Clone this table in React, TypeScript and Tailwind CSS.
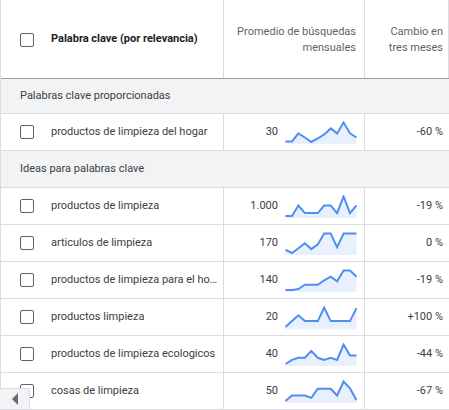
type Row = {
  keyword: string;
  avg: string;
  change: string;
  trend: number[];
};

const provided: Row[] = [
  {
    keyword: 'productos de limpieza del hogar',
    avg: '30',
    change: '-60 %',
    trend: [0.03, 0.03, 0.44, 0.23, 0, 0.18, 0.39, 0.7, 0.44, 1, 0.44, 0.23],
  },
];

const ideas: Row[] = [
  {
    keyword: 'productos de limpieza',
    avg: '1.000',
    change: '-19 %',
    trend: [0, 0, 0.54, 0.15, 0.15, 0.15, 0.54, 0.54, 0.15, 1, 0.15, 0.54],
  },
  {
    keyword: 'articulos de limpieza',
    avg: '170',
    change: '0 %',
    trend: [0.16, 0, 0.24, 0.5, 0.2, 0.44, 1, 1, 0.3, 1, 1, 1],
  },
  {
    keyword: 'productos de limpieza para el hogar',
    avg: '140',
    change: '-19 %',
    trend: [0, 0, 0.05, 0.27, 0.27, 0.27, 0.5, 0.68, 0.45, 1, 1, 0.68],
  },
  {
    keyword: 'productos limpieza',
    avg: '20',
    change: '+100 %',
    trend: [0, 0.3, 0.6, 0.3, 0.3, 0.3, 1, 0.3, 0.3, 0.3, 0.3, 0.97],
  },
  {
    keyword: 'productos de limpieza ecologicos',
    avg: '40',
    change: '-44 %',
    trend: [0, 0.21, 0.32, 0.32, 0.67, 0.32, 0.21, 0.32, 0.21, 1, 0.44, 0.44],
  },
  {
    keyword: 'cosas de limpieza',
    avg: '50',
    change: '-67 %',
    trend: [0, 0.28, 0.28, 0.28, 0.16, 0.63, 0.63, 0.63, 0.28, 1, 0.65, 0.04],
  },
];

function Sparkline({ values }: { values: number[] }) {
  const w = 72;
  const h = 23;
  const pts = values.map((v, i) => {
    const x = 0.5 + (i * (w - 1)) / (values.length - 1);
    const y = 1.5 + (1 - v) * 19.5;
    return `${x.toFixed(1)},${y.toFixed(1)}`;
  });
  const area = `0.5,${h} ${pts.join(' ')} ${w - 0.5},${h}`;
  return (
    <svg width={w} height={h} viewBox={`0 0 ${w} ${h}`} className="shrink-0">
      <polygon points={area} fill="#e8f0fe" />
      <polyline
        points={pts.join(' ')}
        fill="none"
        stroke="#4f8ef0"
        strokeWidth="2"
        strokeLinejoin="miter"
      />
    </svg>
  );
}

function Checkbox() {
  return <div className="h-[14px] w-[14px] shrink-0 rounded-[2px] border-[1.5px] border-[#5f6368] bg-white" />;
}

function DataRow({ row }: { row: Row }) {
  return (
    <div className="flex h-[37px] border-b border-[#dadce0]">
      <div className="flex w-[223px] shrink-0 items-center border-r border-[#dadce0] pr-[1px]">
        <div className="ml-[19px] mr-[17px]">
          <Checkbox />
        </div>
        <span className="truncate">{row.keyword}</span>
      </div>
      <div className="flex w-[141px] shrink-0 items-center justify-end border-r border-[#dadce0] pr-[7px]">
        <span className="mr-[7px]">{row.avg}</span>
        <Sparkline values={row.trend} />
      </div>
      <div className="flex flex-1 items-center justify-end pr-[6px]">{row.change}</div>
    </div>
  );
}

function SectionRow({ label }: { label: string }) {
  return (
    <div className="flex h-[37px] items-center border-b border-[#dadce0] bg-[#f1f3f4] pl-[19px]">
      {label}
    </div>
  );
}

export default function App() {
  return (
    <div className="relative h-[410px] w-[449px] overflow-hidden bg-white font-['Roboto',sans-serif] text-[11px] text-[#3c4043]">
      <div className="border-l border-[#dadce0]">
        <div className="flex h-[79px] border-b border-[#9aa0a6]">
          <div className="flex w-[223px] shrink-0 items-center border-r border-[#dadce0] pt-[1px]">
            <div className="ml-[19px] mr-[17px]">
              <Checkbox />
            </div>
            <span className="font-bold text-[#202124]">Palabra clave (por relevancia)</span>
          </div>
          <div className="flex w-[141px] shrink-0 items-center justify-end border-r border-[#dadce0] pr-[8px] pt-[2px] text-right leading-[16px] text-[#5f6368]">
            Promedio de búsquedas
            <br />
            mensuales
          </div>
          <div className="flex flex-1 items-center justify-end border-r border-[#dadce0] pr-[5px] pt-[2px] text-right leading-[16px] text-[#5f6368]">
            Cambio en
            <br />
            tres meses
          </div>
        </div>
        <div className="flex h-[35px] items-center border-b border-[#dadce0] bg-[#f1f3f4] pl-[19px]">
          Palabras clave proporcionadas
        </div>
        {provided.map((r) => (
          <DataRow key={r.keyword} row={r} />
        ))}
        <SectionRow label="Ideas para palabras clave" />
        {ideas.map((r) => (
          <DataRow key={r.keyword} row={r} />
        ))}
      </div>
      <div className="absolute bottom-0 left-0 flex h-[22px] w-[30px] items-center justify-center rounded-tr-[2px] border border-l-0 border-[#dadce0] bg-[#f1f3f4]">
        <div className="h-0 w-0 border-y-[6px] border-r-[6px] border-y-transparent border-r-[#5f6b7a]" />
      </div>
    </div>
  );
}
